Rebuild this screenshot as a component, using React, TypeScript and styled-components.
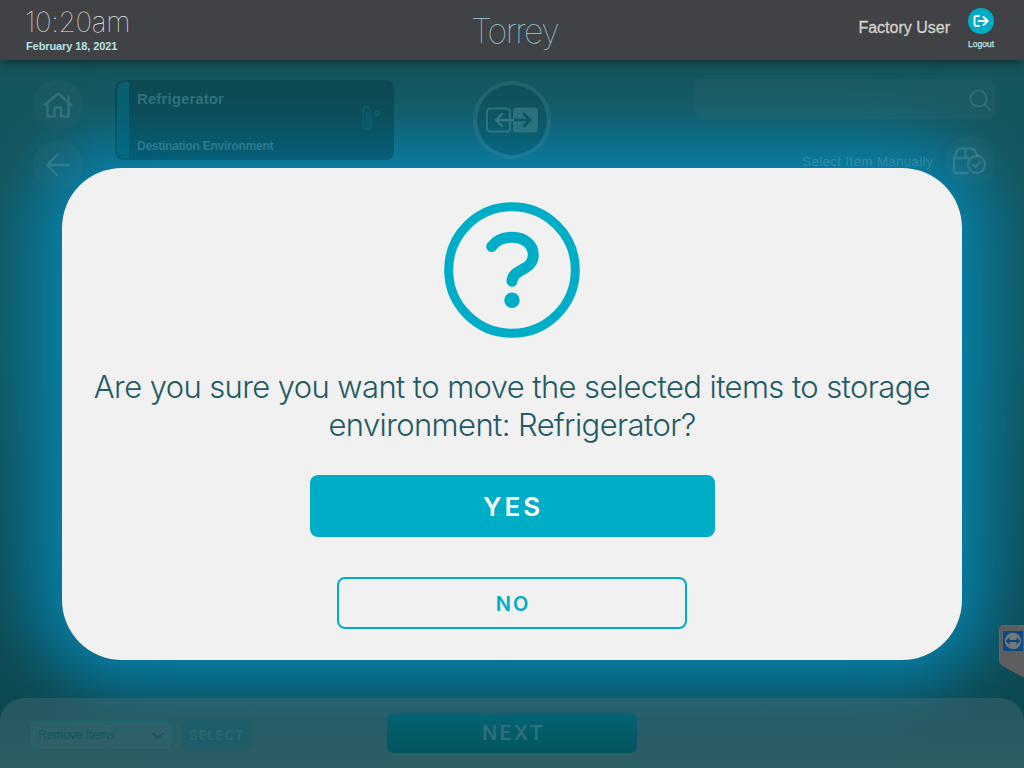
import { ReactNode } from "react";
import styled, { createGlobalStyle } from "styled-components";

const GlobalStyle = createGlobalStyle`
  * { box-sizing: border-box; }
  body { margin: 0; overflow: hidden; }
  button { font: inherit; padding: 0; border: 0; background: none; }
`;

const Screen = styled.div`
  position: relative;
  display: flex;
  flex-direction: column;
  width: 1024px;
  height: 768px;
  overflow: hidden;
  font-family: "Liberation Sans", Arial, sans-serif;
  background: linear-gradient(#17555c 60px, #125660 350px, #0e4850 690px);
`;

const Header = styled.header`
  position: relative;
  z-index: 3;
  display: flex;
  flex: none;
  height: 60px;
  background: #414245;
  box-shadow: 0 2px 10px rgba(0, 0, 0, 0.5);
`;

const HeaderSide = styled.div`
  flex: 1;
  padding-left: 25px;
`;

const Time = styled.div`
  margin-top: 5px;
  height: 34px;
  font: 100 28px/34px Inter, sans-serif;
  letter-spacing: -0.3px;
  color: #e8e8e2;
`;

const DateText = styled.div`
  padding-left: 1px;
  font-size: 11px;
  font-weight: bold;
  line-height: 14px;
  letter-spacing: -0.1px;
  color: #b4e2e6;
`;

const Title = styled.h1`
  margin: 0;
  padding-left: 10px;
  font: 100 34px/61px Inter, sans-serif;
  letter-spacing: -1.6px;
  color: #94d0da;
`;

const UserArea = styled.div`
  display: flex;
  flex: 1;
  justify-content: flex-end;
  padding: 8px 30px 0 0;
`;

const UserName = styled.div`
  margin: 11px 18px 0 0;
  font-size: 16px;
  line-height: 18px;
  color: #d2d2ce;
  -webkit-text-stroke: 0.3px #d2d2ce;
`;

const Logout = styled.button`
  display: flex;
  flex-direction: column;
  align-items: center;
  width: 26px;
  height: 42px;
  font-size: 8.5px;
  line-height: 11px;
  white-space: nowrap;
  color: #b4e2e6;
  -webkit-text-stroke: 0.25px #b4e2e6;
`;

const LogoutCircle = styled.span`
  display: flex;
  align-items: center;
  justify-content: center;
  width: 26px;
  height: 26px;
  margin-bottom: 5px;
  border-radius: 50%;
  background: #00adc6;
`;

const Glow = styled.div`
  position: absolute;
  top: 168px;
  left: 62px;
  width: 900px;
  height: 492px;
  border-radius: 60px;
  box-shadow: 0 -2px 68px 26px #0785b0;
`;

const Content = styled.main`
  position: relative;
  display: flex;
  flex: 1;
  align-items: flex-start;
  padding: 19px 29px 0 33px;
`;

const NavColumn = styled.nav`
  display: flex;
  flex-direction: column;
  gap: 10px;
  margin: 1px 32px 0 0;
`;

const RoundButton = styled.button`
  display: flex;
  align-items: center;
  justify-content: center;
  width: 50px;
  height: 50px;
  border-radius: 50%;
  background: rgba(120, 150, 155, 0.06);
`;

const EnvironmentCard = styled.section`
  display: flex;
  width: 279px;
  height: 80px;
  margin-top: 1px;
  padding: 2px 13px 2px 2px;
  border-radius: 8px;
  background: rgba(0, 52, 62, 0.37);
`;

const CardStripe = styled.div`
  width: 12px;
  border-radius: 7px 0 0 7px;
  background: rgba(0, 128, 155, 0.4);
`;

const CardText = styled.div`
  display: flex;
  flex: 1;
  flex-direction: column;
  justify-content: space-between;
  padding: 8px 0 5px 8px;
  font-weight: bold;
  color: rgba(110, 178, 190, 0.38);
`;

const CardName = styled.div`
  font-size: 15px;
  line-height: 18px;
  letter-spacing: 0.1px;
`;

const CardLabel = styled.div`
  font-size: 12px;
  line-height: 14px;
  letter-spacing: -0.25px;
`;

const SwapCircle = styled.div`
  display: flex;
  align-items: center;
  justify-content: center;
  width: 78px;
  height: 78px;
  margin: 2px 144px 0 79px;
  border: 4px solid rgba(90, 150, 160, 0.2);
  border-radius: 50%;
  background: rgba(0, 60, 70, 0.25);
  background-clip: padding-box;
`;

const SearchColumn = styled.div`
  width: 300px;
`;

const SearchBox = styled.div`
  display: flex;
  align-items: center;
  justify-content: flex-end;
  height: 40px;
  padding: 2px 3px 0 0;
  border-radius: 6px;
  background: rgba(110, 140, 145, 0.08);
`;

const ManualRow = styled.div`
  display: flex;
  align-items: center;
  justify-content: flex-end;
  gap: 12px;
  height: 50px;
  margin-top: 17px;
  font-size: 13.5px;
  letter-spacing: 0.28px;
  color: rgba(100, 165, 180, 0.38);
  -webkit-text-stroke: 0.3px rgba(100, 165, 180, 0.26);
`;

const Footer = styled.footer`
  position: relative;
  display: flex;
  flex: 0 0 70px;
  padding: 15px 29px 0;
  border-radius: 24px 24px 0 0;
  background: linear-gradient(rgba(84, 110, 120, 0.36), rgba(75, 116, 121, 0.5));
`;

const Dropdown = styled.button`
  display: flex;
  align-items: center;
  justify-content: space-between;
  width: 144px;
  height: 30px;
  margin: 7px 9px 0 0;
  padding: 0 7px 1px 8px;
  border: 1px solid #17616b;
  border-radius: 7px;
  background: rgba(75, 125, 132, 0.14);
  font-size: 12px;
  letter-spacing: -0.05px;
  color: #165762;
  -webkit-text-stroke: 0.25px #165762;
`;

const SelectButton = styled.button`
  width: 70px;
  height: 30px;
  margin: 7px 135px 0 0;
  border-radius: 6px;
  background: rgba(10, 96, 110, 0.34);
  font: 600 13px Inter, sans-serif;
  letter-spacing: 0.9px;
  color: rgba(70, 125, 133, 0.32);
`;

const NextButton = styled.button`
  width: 250px;
  height: 40px;
  border-radius: 7px;
  background: linear-gradient(#046374, #02545f);
  font: 600 20px Inter, sans-serif;
  letter-spacing: 2.2px;
  text-indent: 3px;
  color: #2e6e77;
`;

const RemoteTab = styled.aside`
  position: absolute;
  top: 625px;
  left: 999px;
  width: 25px;
  height: 53px;
`;

const Overlay = styled.div`
  position: absolute;
  inset: 0;
  z-index: 2;
  display: flex;
  justify-content: center;
  align-items: flex-start;
  padding-top: 168px;
`;

const Dialog = styled.section`
  display: flex;
  flex-direction: column;
  align-items: center;
  width: 900px;
  height: 492px;
  padding-top: 34px;
  border-radius: 60px;
  background: #f1f1f1;
`;

const Question = styled.p`
  width: 860px;
  margin: 30px 0 0;
  font: 300 31px/38px Inter, sans-serif;
  letter-spacing: -0.6px;
  text-align: center;
  color: #235a63;
`;

const DialogButton = styled.button<{ $primary?: boolean }>`
  width: ${({ $primary }) => ($primary ? 405 : 350)}px;
  height: ${({ $primary }) => ($primary ? 62 : 52)}px;
  margin: ${({ $primary }) => ($primary ? "31px 0 40px 1px" : "0")};
  padding-top: ${({ $primary }) => ($primary ? 1 : 2)}px;
  border: ${({ $primary }) => ($primary ? "0" : "2px solid #00adc6")};
  border-radius: 8px;
  background: ${({ $primary }) => ($primary ? "#00adc6" : "transparent")};
  color: ${({ $primary }) => ($primary ? "#fff" : "#00adc6")};
  font: 600 ${({ $primary }) => ($primary ? 26 : 20)}px Inter, sans-serif;
  letter-spacing: ${({ $primary }) => ($primary ? 3 : 2)}px;
  text-indent: ${({ $primary }) => ($primary ? 1 : 2)}px;
`;

interface IconProps {
  width: number;
  height: number;
  color?: string;
  stroke?: number;
  children: ReactNode;
}

const Icon = ({ width, height, color = "rgba(110,165,175,.3)", stroke = 2, children }: IconProps) => (
  <svg
    width={width}
    height={height}
    viewBox={`0 0 ${width} ${height}`}
    fill="none"
    stroke={color}
    strokeWidth={stroke}
    strokeLinecap="round"
    strokeLinejoin="round"
  >
    {children}
  </svg>
);

const TemperatureIcon = styled.svg`
  align-self: center;
  margin-top: -4px;
`;

const App = () => {
  return (
    <Screen>
      <GlobalStyle />
      <Glow />
      <Header>
        <HeaderSide>
          <Time>10:20am</Time>
          <DateText>February 18, 2021</DateText>
        </HeaderSide>
        <Title>Torrey</Title>
        <UserArea>
          <UserName>Factory User</UserName>
          <Logout>
            <LogoutCircle>
              <Icon width={16} height={14} color="#fff" stroke={1.9}>
                <path d="M6 2H3.5Q1.5 2 1.5 4V10Q1.5 12 3.5 12H6M5.5 7H14.5M10.5 3L14.7 7L10.5 11" />
              </Icon>
            </LogoutCircle>
            Logout
          </Logout>
        </UserArea>
      </Header>

      <Content>
        <NavColumn>
          <RoundButton>
            <Icon width={30} height={26} stroke={2.4}>
              <path d="M1.5 13L15 1.5L28.5 13M4.5 11.5V24.5H11.5V17Q11.5 15.5 13 15.5H16.5Q18 15.5 18 17V24.5H25.5V11.5M25.5 9V4.5" />
            </Icon>
          </RoundButton>
          <RoundButton>
            <Icon width={26} height={24} stroke={2.4}>
              <path d="M12 2L2 12L12 22M2.5 12H24" />
            </Icon>
          </RoundButton>
        </NavColumn>

        <EnvironmentCard>
          <CardStripe />
          <CardText>
            <CardName>Refrigerator</CardName>
            <CardLabel>Destination Environment</CardLabel>
          </CardText>
          <TemperatureIcon width="21" height="26" viewBox="0 0 21 26" fill="none" stroke="rgba(0,130,150,.32)" strokeWidth="1.8">
            <path d="M3.5 16V5.5Q3.5 2 7 2Q10 2 10 5.5V16Q12 18 11 21Q9.5 24 6.5 24Q3.5 24 2.5 21Q1.8 18 3.5 16Z" />
            <circle cx="6.8" cy="19.5" r="1.8" />
            <path d="M6.8 7V17" />
            <circle cx="17" cy="8" r="2" />
          </TemperatureIcon>
        </EnvironmentCard>

        <SwapCircle>
          <svg width="54" height="26" viewBox="0 0 54 26" fill="none" strokeLinecap="round" strokeLinejoin="round">
            <rect x="2" y="1.5" width="23" height="23" rx="3" stroke="rgba(90,150,160,.42)" strokeWidth="2" />
            <rect x="28" y="0.5" width="25" height="25" rx="3.5" fill="rgba(80,140,150,.47)" />
            <path d="M24 13H44M39 7L45 13L39 19" stroke="#0b5664" strokeWidth="2.5" />
            <path d="M17 7L11 13L17 19M11.5 13H28" stroke="#357784" strokeWidth="2.4" />
          </svg>
        </SwapCircle>

        <SearchColumn>
          <SearchBox>
            <Icon width={24} height={24} stroke={1.7}>
              <circle cx="10.5" cy="10.5" r="8" />
              <path d="M16.5 16.5L22 22" />
            </Icon>
          </SearchBox>
          <ManualRow>
            Select Item Manually
            <RoundButton>
              <Icon width={36} height={28} stroke={2.4}>
                <path d="M16 26H4Q2 26 2 24V11L5 4Q6 1.5 8 1.5H20Q22 1.5 23 4L25.5 8.5M2 11H16M13.5 2V11" />
                <circle cx="24.5" cy="17.5" r="8.5" />
                <path d="M20.8 17.5L23.5 20.2L28.5 14.8" />
              </Icon>
            </RoundButton>
          </ManualRow>
        </SearchColumn>
      </Content>

      <Footer>
        <Dropdown>
          Remove Items
          <Icon width={14} height={8} color="#165762" stroke={1.9}>
            <path d="M2 2.500L7 7L12 2.500" />
          </Icon>
        </Dropdown>
        <SelectButton>SELECT</SelectButton>
        <NextButton>NEXT</NextButton>
      </Footer>

      <RemoteTab>
        <svg width="25" height="53" viewBox="0 0 25 53">
          <path d="M26 .5H5Q.5 .5 .5 5V35Q.5 38.5 4 40.5L26 52.5Z" fill="#5e5e60" stroke="#785f60" />
          <rect x="4" y="6" width="20" height="20" fill="#0c4a80" />
          <circle cx="14" cy="16" r="8.3" fill="#71777d" />
          <path d="M6.5 16L10.5 12.5V15H17.5V12.5L21.5 16L17.5 19.5V17H10.5V19.5Z" fill="#0c4a80" />
        </svg>
      </RemoteTab>

      <Overlay>
        <Dialog>
          <svg width="136" height="136" viewBox="0 0 136 136" fill="none" stroke="#00adc6">
            <circle cx="68" cy="68" r="63.3" strokeWidth="9" />
            <path
              d="M47.7 44.5C52.5 38 60 35.2 68 35.2C81 35.2 89.3 43 89.3 53C89.3 69 68.2 66.500 68 79.200"
              strokeWidth="11"
              strokeLinecap="round"
            />
            <circle cx="68" cy="98.3" r="7.7" fill="#00adc6" stroke="none" />
          </svg>
          <Question>
            Are you sure you want to move the selected items to storage environment: Refrigerator?
          </Question>
          <DialogButton $primary>YES</DialogButton>
          <DialogButton>NO</DialogButton>
        </Dialog>
      </Overlay>
    </Screen>
  );
};

export default App;
